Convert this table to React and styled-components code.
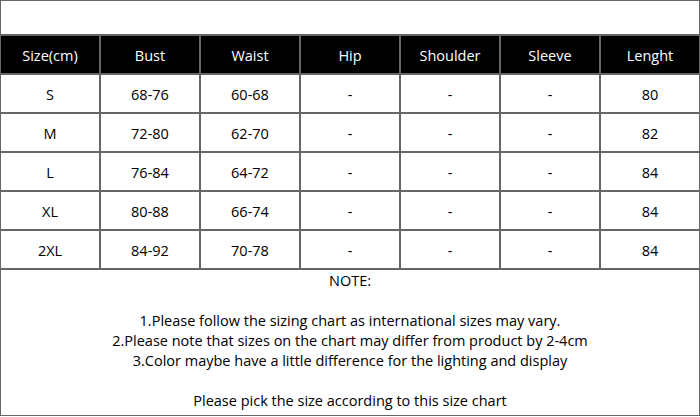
import React from "react";
import styled, { createGlobalStyle } from "styled-components";

const Global = createGlobalStyle`
  html, body { margin: 0; padding: 0; background: #fff; }
  body { font-family: "Open Sans", "Noto Sans", "Liberation Sans", sans-serif; }
`;

const Frame = styled.div`
  box-sizing: border-box;
  width: 700px;
  height: 416px;
  border: 1px solid #666;
  background: #fff;
  display: flex;
  flex-direction: column;
`;

const TopBlank = styled.div`
  height: 33px;
  border-bottom: 2px solid #666;
`;

const Grid = styled.div`
  display: grid;
  grid-template-columns: repeat(7, 98px);
  column-gap: 2px;
  row-gap: 2px;
  background: #666;
  border-bottom: 2px solid #666;
`;

const Cell = styled.div`
  box-sizing: border-box;
  height: 37px;
  padding-top: 2px;
  display: flex;
  align-items: center;
  justify-content: center;
  font-size: 14.5px;
  background: ${(p) => (p.$head ? "#000" : "#fff")};
  color: ${(p) => (p.$head ? "#fff" : "#000")};
`;

const Notes = styled.div`
  flex: 1;
  display: flex;
  flex-direction: column;
  align-items: center;
  font-size: 14.5px;
  line-height: 20px;
  color: #000;
  padding-top: 1px;
`;

const NoteLine = styled.div`
  margin-top: ${(p) => p.$gap || 0}px;
`;

const headers = ["Size(cm)", "Bust", "Waist", "Hip", "Shoulder", "Sleeve", "Lenght"];
const rows = [
  ["S", "68-76", "60-68", "-", "-", "-", "80"],
  ["M", "72-80", "62-70", "-", "-", "-", "82"],
  ["L", "76-84", "64-72", "-", "-", "-", "84"],
  ["XL", "80-88", "66-74", "-", "-", "-", "84"],
  ["2XL", "84-92", "70-78", "-", "-", "-", "84"],
];

export default function App() {
  return (
    <>
      <Global />
      <Frame>
        <TopBlank />
        <Grid>
          {headers.map((h) => (
            <Cell key={h} $head>
              {h}
            </Cell>
          ))}
          {rows.map((r, i) =>
            r.map((c, j) => <Cell key={i + "-" + j}>{c}</Cell>)
          )}
        </Grid>
        <Notes>
          <NoteLine>NOTE:</NoteLine>
          <NoteLine $gap={20}>1.Please follow the sizing chart as international sizes may vary.</NoteLine>
          <NoteLine>2.Please note that sizes on the chart may differ from product by 2-4cm</NoteLine>
          <NoteLine>3.Color maybe have a little difference for the lighting and display</NoteLine>
          <NoteLine $gap={20}>Please pick the size according to this size chart</NoteLine>
        </Notes>
      </Frame>
    </>
  );
}
